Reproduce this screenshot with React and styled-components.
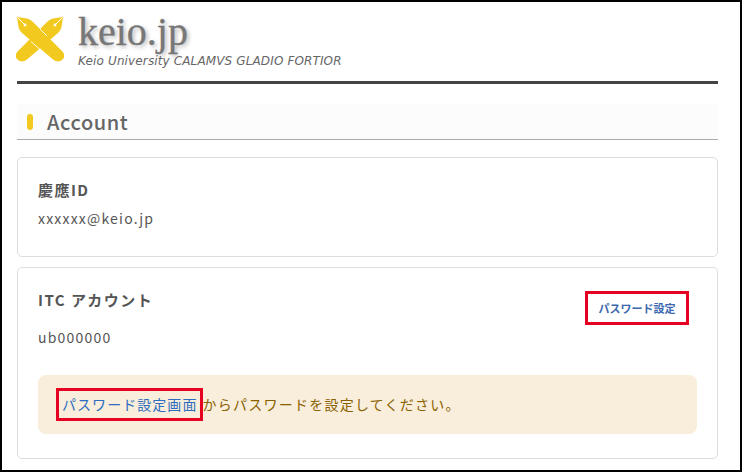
import React from "react";
import styled, { createGlobalStyle } from "styled-components";

const Global = createGlobalStyle`
  html, body { margin: 0; padding: 0; background: #fff; }
  body { font-family: "Noto Sans CJK JP", "Noto Sans", sans-serif; }
`;

const Frame = styled.div`
  box-sizing: border-box;
  width: 742px;
  height: 472px;
  border: 2px solid #000;
  padding: 0 22px 0 15px;
  overflow: hidden;
  background: #fff;
`;

const Header = styled.header`
  display: flex;
  align-items: flex-start;
  height: 79px;
  border-bottom: 3px solid #444;
`;

const LogoWrap = styled.div`
  width: 48px;
  height: 48px;
  margin: 13px 0 0 -1px;
  flex: none;
`;

const Brand = styled.div`
  margin: 7px 0 0 14px;
  display: flex;
  flex-direction: column;
`;

const Title = styled.div`
  font-family: "Liberation Serif", serif;
  font-size: 40px;
  line-height: 45px;
  color: #777;
  -webkit-text-stroke: 0.35px #777;
  text-shadow: 2px 2px 4px #b4b4b4;
`;

const Tagline = styled.div`
  font-family: "DejaVu Sans", sans-serif;
  font-style: italic;
  font-size: 12px;
  line-height: 14px;
  letter-spacing: 0.13px;
  color: #666;
`;

const SectionTitle = styled.h2`
  box-sizing: border-box;
  margin: 20px 0 17px;
  height: 36px;
  display: flex;
  align-items: center;
  gap: 14px;
  padding-left: 10px;
  background: #fcfcfc;
  border-bottom: 1px solid #aaa;
  font-size: 20px;
  font-weight: 500;
  letter-spacing: 0.6px;
  color: #666;
`;

const Marker = styled.span`
  width: 6px;
  height: 16px;
  border-radius: 3px;
  background: #f2ca1f;
`;

const Card = styled.section`
  box-sizing: border-box;
  height: ${(p) => p.$h}px;
  margin-bottom: 10px;
  padding: 21px 20px 0;
  background: #fff;
  border: 1px solid #ddd;
  border-radius: 5px;
`;

const CardTop = styled.div`
  display: flex;
  justify-content: space-between;
  align-items: flex-start;
`;

const Label = styled.div`
  font-size: 15px;
  line-height: 22px;
  font-weight: 700;
  letter-spacing: 1.45px;
  color: #555;
`;

const Value = styled.div`
  margin-top: ${(p) => p.$mt}px;
  font-size: 14px;
  line-height: 20px;
  letter-spacing: 1.2px;
  color: #555;
`;

const SmallLink = styled.a`
  box-sizing: border-box;
  width: 104px;
  height: 34px;
  margin: 2px 8px 0 0;
  display: flex;
  align-items: center;
  justify-content: center;
  border: 3px solid #e60021;
  font-size: 11px;
  font-weight: 700;
  color: #3a67ae;
`;

const Notice = styled.div`
  height: 59px;
  margin-top: 28px;
  display: flex;
  align-items: center;
  padding-left: 18px;
  background: #f9eedb;
  border-radius: 8px;
  font-size: 14px;
  letter-spacing: 1.25px;
  color: #8a6100;
`;

const InlineLink = styled.a`
  box-sizing: border-box;
  height: 33px;
  display: flex;
  align-items: center;
  padding: 0 3px 2px 3px;
  border: 3px solid #e60021;
  letter-spacing: 1.05px;
  color: #2f6cc0;
`;

const NoticeText = styled.span`
  margin: 0 0 2px -1px;
`;

const Logo = () => (
  <svg viewBox="0 0 48 48" width="48" height="48">
    <path
      fill="#f2ca1f"
      d="M47 2 L37 3.5 C35 4 33 5 31 7 L2 36 C-1 39 -1 42 1.5 44.5 C4 47 8 47 11 44.5 L42 18 C44 16 45 14 45.5 12 Z"
    />
    <path
      fill="#f2ca1f"
      d="M1 2 L11 3.5 C13 4 15 5 17 7 L46 36 C49 39 49 42 46.5 44.5 C44 47 40 47 37 44.5 L6 18 C4 16 3 14 2.5 12 Z"
    />
    <path stroke="#fff" strokeWidth="1" fill="none" d="M1.5 2.5 L8.5 9.5 M46.5 2.5 L39.5 9.5" />
    <path stroke="#fff" strokeWidth="0.9" fill="none" d="M15 26.5 L25 35.5 M24 14 L31 21" />
    <circle cx="9" cy="10" r="1.4" fill="#fff" />
    <circle cx="39" cy="10" r="1.4" fill="#fff" />
  </svg>
);

export default function App() {
  return (
    <>
      <Global />
      <Frame>
        <Header>
          <LogoWrap>
            <Logo />
          </LogoWrap>
          <Brand>
            <Title>keio.jp</Title>
            <Tagline>Keio University CALAMVS GLADIO FORTIOR</Tagline>
          </Brand>
        </Header>
        <SectionTitle>
          <Marker />
          Account
        </SectionTitle>
        <Card $h={100}>
          <Label>慶應ID</Label>
          <Value $mt={7}>xxxxxx@keio.jp</Value>
        </Card>
        <Card $h={192}>
          <CardTop>
            <Label>ITC アカウント</Label>
            <SmallLink>パスワード設定</SmallLink>
          </CardTop>
          <Value $mt={2}>ub000000</Value>
          <Notice>
            <InlineLink>パスワード設定画面</InlineLink>
            <NoticeText>からパスワードを設定してください。</NoticeText>
          </Notice>
        </Card>
      </Frame>
    </>
  );
}
